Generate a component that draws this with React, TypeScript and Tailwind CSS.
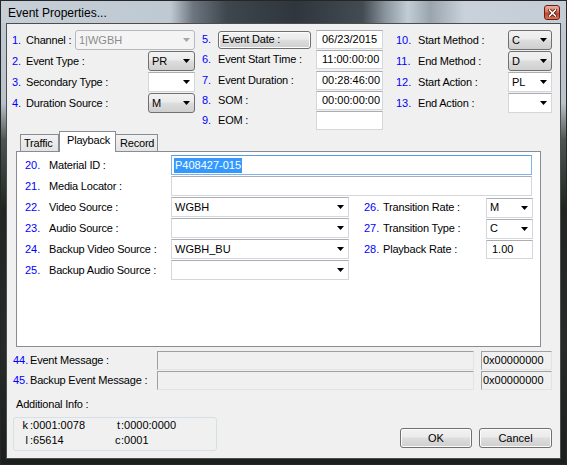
import React from 'react'

const listBox =
  'rounded-[3px] border border-[#707070] bg-[linear-gradient(#f2f2f2,#ebebeb_45%,#dddddd_50%,#cfcfcf)]'
const editBox = 'border border-[#d3d6db] border-t-[#abadb3] bg-white'
const btn =
  'rounded-[3px] border border-[#707070] bg-[linear-gradient(#f2f2f2,#ebebeb_45%,#dddddd_50%,#cfcfcf)] shadow-[inset_0_0_0_1px_#fcfcfc]'

function Arrow({ gray }: { gray?: boolean }) {
  return (
    <svg width="7" height="4" viewBox="0 0 7 4" className="shrink-0">
      <path d="M0 0h7L3.5 4z" fill={gray ? '#a6a6a6' : '#000'} />
    </svg>
  )
}

function Combo({ value = '', kind = 'list', className = '' }: { value?: string; kind?: 'list' | 'edit' | 'off'; className?: string }) {
  const look =
    kind === 'list' ? listBox : kind === 'edit' ? editBox : 'rounded-[3px] border border-[#b5b9bd] bg-[#f4f4f4] text-[#8c8c8c]'
  return (
    <div className={`flex h-[20px] shrink-0 items-center justify-between pl-[3px] pr-[4px] ${look} ${className}`}>
      <span>{value}</span>
      <Arrow gray={kind === 'off'} />
    </div>
  )
}

function TextBox({ value = '', className = '' }: { value?: string; className?: string }) {
  return <div className={`flex h-[19px] shrink-0 items-center pl-[5px] ${editBox} ${className}`}>{value}</div>
}

function Label({ n, text, numW }: { n: string; text: string; numW: string }) {
  return (
    <div className="flex items-center">
      <span className={`text-[#0000ff] ${numW}`}>{n}</span>
      <span className="tracking-[-0.2px]">{text}</span>
    </div>
  )
}

// one row of the top block: label on the left, control pinned right
function Row({ children }: { children: React.ReactNode }) {
  return <div className="flex h-[21px] items-center justify-between pb-[1px]">{children}</div>
}

function PanelLabel({ n, text }: { n: string; text: string }) {
  return (
    <div className="flex w-[146px] shrink-0 items-center">
      <span className="w-[24px] text-[#0000ff]">{n}</span>
      <span className="tracking-[-0.2px]">{text}</span>
    </div>
  )
}

function RightItem({ n, text, children }: { n: string; text: string; children: React.ReactNode }) {
  return (
    <div className="ml-[15px] flex items-center">
      <span className="w-[19px] text-[#0000ff]">{n}</span>
      <span className="w-[103px] tracking-[-0.2px]">{text}</span>
      {children}
    </div>
  )
}

function MsgRow({ n, text }: { n: string; text: string }) {
  return (
    <div className="flex h-[20px] items-start pl-[6px]">
      <div className="flex h-[19px] w-[144px] items-center">
        <span className="w-[17px] text-[#0000ff]">{n}</span>
        <span className="tracking-[-0.2px]">{text}</span>
      </div>
      <div className="h-[19px] w-[317px] border border-[#a0a0a0] border-r-[#e3e3e3] border-b-[#e3e3e3]" />
      <div className="ml-[7px] flex h-[19px] w-[71px] items-center border border-[#a0a0a0] border-r-[#e3e3e3] border-b-[#e3e3e3] pl-[1px]">
        0x00000000
      </div>
    </div>
  )
}

export default function App() {
  return (
    <div className="flex h-[465px] w-[567px] flex-col overflow-hidden border border-[#262626] bg-[linear-gradient(180deg,#c3cbd3_0%,#b9c3cc_22%,#4b5550_30%,#1f2622_45%,#252b28_75%,#1b1f1d_100%)] px-[5px] pb-[5px] font-['Liberation_Sans',Arial,sans-serif] text-[11px] leading-none text-black">
      {/* title bar */}
      <div className="-mx-[5px] flex h-[22px] shrink-0 items-start justify-between bg-[linear-gradient(90deg,#c6cfd8_0%,#bfc9d2_30%,#6d767f_34%,#3e464e_40%,#2f363d_52%,#434b53_64%,#8a949d_68%,#c2ccd5_72%,#9aa4ad_76%,#c9d2da_82%,#c4cdd6_100%)] pl-[7px] pr-[6px]">
        <span className="pt-[6px] text-[12px]">Event Properties...</span>
        <div className="mt-[4px] flex h-[15px] w-[16px] items-center justify-center rounded-[3px] border border-[#6b1f14] bg-[linear-gradient(#eab1a2,#d8735c_45%,#c5442c_55%,#d9745a)]">
          <svg width="9" height="8" viewBox="0 0 9 8">
            <path d="M1.5 1l6 6M7.5 1l-6 6" stroke="#4a140c" strokeWidth="3.2" strokeLinecap="square" />
            <path d="M1.5 1l6 6M7.5 1l-6 6" stroke="#fff" strokeWidth="1.6" strokeLinecap="square" />
          </svg>
        </div>
      </div>

      {/* dialog body */}
      <div className="flex flex-1 flex-col border border-[#4d4d4d] bg-[#f0f0f0]">
        {/* top fields */}
        <div className="flex h-[107px] shrink-0 pl-[5px] pt-[6px]">
          <div className="flex w-[183px] flex-col">
            <Row>
              <Label n="1." text="Channel :" numW="w-[14px]" />
              <Combo kind="off" value="1|WGBH" className="w-[120px]" />
            </Row>
            <Row>
              <Label n="2." text="Event Type :" numW="w-[14px]" />
              <Combo value="PR" className="w-[47px]" />
            </Row>
            <Row>
              <Label n="3." text="Secondary Type :" numW="w-[14px]" />
              <Combo kind="edit" className="w-[47px]" />
            </Row>
            <Row>
              <Label n="4." text="Duration Source :" numW="w-[14px]" />
              <Combo value="M" className="w-[47px]" />
            </Row>
          </div>

          <div className="ml-[7px] flex w-[181px] flex-col">
            <Row>
              <div className="flex items-center">
                <span className="w-[16px] text-[#0000ff]">5.</span>
                <div className={`flex h-[18px] w-[93px] items-center pl-[3px] tracking-[-0.2px] ${btn}`}>Event Date :</div>
              </div>
              <TextBox value="06/23/2015" className="w-[67px]" />
            </Row>
            <Row>
              <Label n="6." text="Event Start Time :" numW="w-[16px]" />
              <TextBox value="11:00:00:00" className="w-[67px]" />
            </Row>
            <Row>
              <Label n="7." text="Event Duration :" numW="w-[16px]" />
              <TextBox value="00:28:46:00" className="w-[67px]" />
            </Row>
            <Row>
              <Label n="8." text="SOM :" numW="w-[16px]" />
              <TextBox value="00:00:00:00" className="w-[67px]" />
            </Row>
            <Row>
              <Label n="9." text="EOM :" numW="w-[16px]" />
              <TextBox className="w-[67px]" />
            </Row>
          </div>

          <div className="ml-[13px] flex w-[156px] flex-col">
            <Row>
              <Label n="10." text="Start Method :" numW="w-[22px]" />
              <Combo value="C" className="w-[44px]" />
            </Row>
            <Row>
              <Label n="11." text="End Method :" numW="w-[22px]" />
              <Combo value="D" className="w-[44px]" />
            </Row>
            <Row>
              <Label n="12." text="Start Action :" numW="w-[22px]" />
              <Combo kind="edit" value="PL" className="w-[44px]" />
            </Row>
            <Row>
              <Label n="13." text="End Action :" numW="w-[22px]" />
              <Combo kind="edit" className="w-[44px]" />
            </Row>
          </div>
        </div>

        {/* tabs */}
        <div className="relative z-10 ml-[9px] flex h-[20px] shrink-0 items-end pl-[4px]">
          <div className="flex h-[17px] w-[39px] items-center border border-b-0 border-[#898c95] bg-[linear-gradient(#f2f2f2,#e3e3e3)] pl-[3px] tracking-[-0.2px]">
            Traffic
          </div>
          <div className="-mb-px flex h-[21px] w-[57px] items-center border border-b-0 border-[#898c95] bg-white pb-[3px] pl-[7px] tracking-[-0.2px]">
            Playback
          </div>
          <div className="flex h-[17px] w-[42px] items-center border border-b-0 border-l-0 border-[#898c95] bg-[linear-gradient(#f2f2f2,#e3e3e3)] pl-[4px] tracking-[-0.2px]">
            Record
          </div>
        </div>

        <div className="ml-[9px] flex h-[196px] w-[525px] shrink-0 flex-col border border-[#898c95] bg-white pl-[8px] pt-[3px]">
          <div className="flex h-[21px]">
            <PanelLabel n="20." text="Material ID :" />
            <div className="flex h-[20px] w-[361px] items-center border border-[#7eb4ea] border-t-[#569de5] pl-[2px]">
              <span className="bg-[#3399ff] px-px py-[2px] text-white">P408427-015</span>
            </div>
          </div>
          <div className="flex h-[21px]">
            <PanelLabel n="21." text="Media Locator :" />
            <TextBox className="h-[20px] w-[361px]" />
          </div>
          <div className="flex h-[21px]">
            <PanelLabel n="22." text="Video Source :" />
            <Combo kind="edit" value="WGBH" className="w-[178px]" />
            <RightItem n="26." text="Transition Rate :">
              <Combo kind="edit" value="M" className="w-[47px]" />
            </RightItem>
          </div>
          <div className="flex h-[21px]">
            <PanelLabel n="23." text="Audio Source :" />
            <Combo kind="edit" className="w-[178px]" />
            <RightItem n="27." text="Transition Type :">
              <Combo kind="edit" value="C" className="w-[47px]" />
            </RightItem>
          </div>
          <div className="flex h-[21px]">
            <PanelLabel n="24." text="Backup Video Source :" />
            <Combo kind="edit" value="WGBH_BU" className="w-[178px]" />
            <RightItem n="28." text="Playback Rate :">
              <TextBox value="1.00" className="w-[47px]" />
            </RightItem>
          </div>
          <div className="flex h-[21px]">
            <PanelLabel n="25." text="Backup Audio Source :" />
            <Combo kind="edit" className="w-[178px]" />
          </div>
        </div>

        {/* messages */}
        <div className="mt-[4px] flex shrink-0 flex-col">
          <MsgRow n="44." text="Event Message :" />
          <MsgRow n="45." text="Backup Event Message :" />
        </div>

        {/* footer */}
        <div className="flex flex-1 justify-between">
          <div className="flex flex-col pl-[6px] pt-[7px]">
            <span className="h-[13px] pl-[3px] leading-[13px] tracking-[-0.2px]">Additional Info :</span>
            <div className="mt-[6px] flex h-[34px] w-[204px] flex-col rounded-[3px] border border-[#d5dfe5]">
              <div className="flex h-[15px] items-center pl-[8px]">
                <div className="flex w-[93px]">
                  <span className="w-[6px] text-right">k</span>
                  <span className="ml-[2px]">:0001:0078</span>
                </div>
                <div className="flex">
                  <span className="w-[5px] text-right">t</span>
                  <span className="ml-[1px]">:0000:0000</span>
                </div>
              </div>
              <div className="flex h-[15px] items-center pl-[8px]">
                <div className="flex w-[93px]">
                  <span className="w-[6px] text-right">l</span>
                  <span className="ml-[2px]">:65614</span>
                </div>
                <div className="flex">
                  <span className="w-[5px] text-right">c</span>
                  <span className="ml-[1px]">:0001</span>
                </div>
              </div>
            </div>
          </div>
          <div className="flex items-end gap-[7px] pb-[10px] pr-[8px]">
            <button className={`h-[20px] w-[72px] ${btn}`}>OK</button>
            <button className={`h-[20px] w-[73px] ${btn}`}>Cancel</button>
          </div>
        </div>
      </div>
    </div>
  )
}
